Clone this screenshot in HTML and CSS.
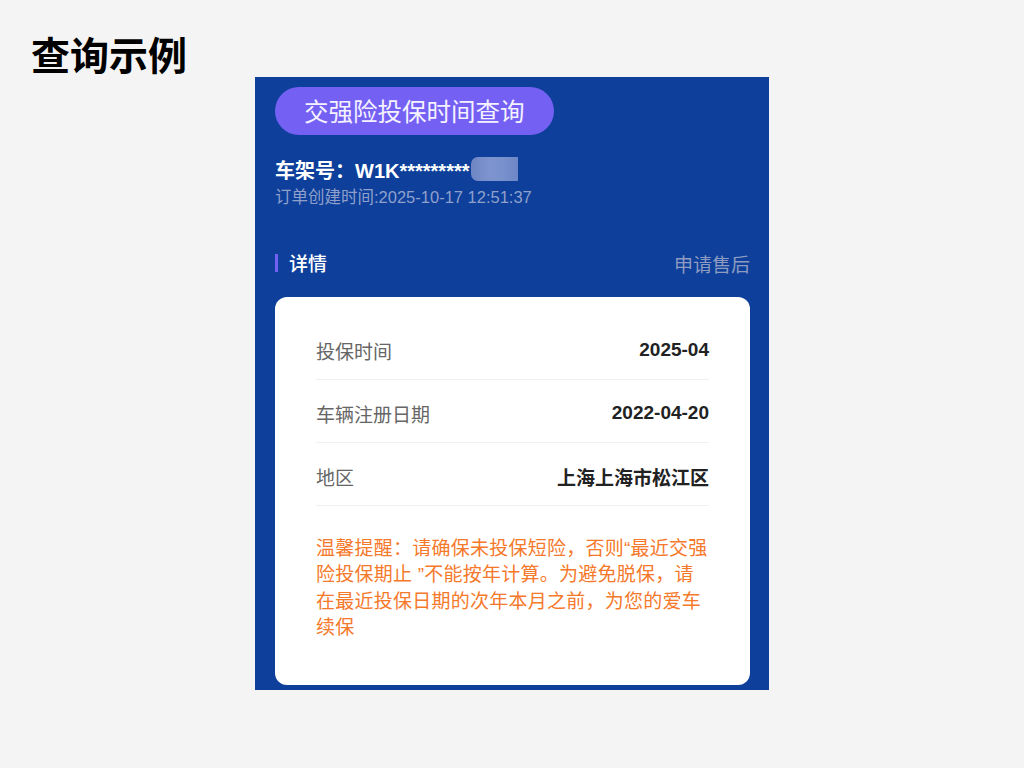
FILE: index.html
```html
<!DOCTYPE html>
<html lang="zh-CN">
<head>
    <meta charset="UTF-8">
    <meta name="viewport" content="width=device-width, initial-scale=1.0">
    <title>查询示例</title>
    <link rel="stylesheet" href="styles.css">
</head>
<body>
    <h1 class="page-title">查询示例</h1>

    <div class="phone">
        <div class="pill">交强险投保时间查询</div>

        <div class="vin">
            <span>车架号：W1K*********</span><span class="blur"></span>
        </div>
        <p class="order-time">订单创建时间:2025-10-17 12:51:37</p>

        <div class="section-head">
            <span class="section-title">详情</span>
            <span class="after-sale">申请售后</span>
        </div>

        <div class="card">
            <div class="row">
                <span class="label">投保时间</span>
                <span class="value">2025-04</span>
            </div>
            <div class="row">
                <span class="label">车辆注册日期</span>
                <span class="value">2022-04-20</span>
            </div>
            <div class="row">
                <span class="label">地区</span>
                <span class="value">上海上海市松江区</span>
            </div>
            <p class="notice">温馨提醒：请确保未投保短险，否则“最近交强险投保期止 ”不能按年计算。为避免脱保，请在最近投保日期的次年本月之前，为您的爱车续保</p>
        </div>
    </div>
</body>
</html>
```

FILE: styles.css
```css
* {
    margin: 0;
    padding: 0;
    box-sizing: border-box;
}

body {
    background-color: #f4f4f4;
    font-family: 'Liberation Sans', 'Noto Sans CJK SC', sans-serif;
    color: #222;
}

.page-title {
    font-family: 'Noto Sans CJK SC', sans-serif;
    font-size: 39px;
    font-weight: 700;
    line-height: 52px;
    margin: 27px 0 0 31px;
    color: #000;
}

.phone {
    width: 514px;
    height: 613px;
    margin: -2px 0 0 255px;
    background-color: #0d3f9b;
    padding: 10px 19px 0 20px;
}

.pill {
    display: inline-block;
    height: 48px;
    line-height: 48px;
    padding: 0 29px;
    border-radius: 24px;
    background-color: #7461f4;
    color: #f4f2ff;
    font-family: 'Noto Sans CJK SC', sans-serif;
    font-size: 24.5px;
}

.vin {
    display: flex;
    align-items: center;
    margin-top: 21px;
    height: 26px;
    color: #fff;
    font-size: 20px;
    font-weight: 700;
}

.blur {
    width: 47px;
    height: 24px;
    margin-left: 1px;
    border-radius: 7px 0 0 7px;
    background: linear-gradient(90deg, #6f86c4 0%, #7d94d0 40%, #7890cc 70%, #6e86c5 100%);
}

.order-time {
    margin-top: 3px;
    font-size: 16.5px;
    line-height: 24px;
    color: #90a0cb;
}

.section-head {
    display: flex;
    justify-content: space-between;
    align-items: center;
    margin-top: 40px;
    height: 28px;
}

.section-title {
    border-left: 3px solid #7461f4;
    padding-left: 11px;
    line-height: 18px;
    color: #fff;
    font-family: 'Noto Sans CJK SC', sans-serif;
    font-size: 19px;
    font-weight: 500;
}

.after-sale {
    color: #8d9cc0;
    font-family: 'Noto Sans CJK SC', sans-serif;
    font-size: 19px;
}

.card {
    margin-top: 20px;
    height: 388px;
    background-color: #fff;
    border-radius: 12px;
    padding: 20px 41px 0 41px;
}

.row {
    display: flex;
    justify-content: space-between;
    align-items: center;
    height: 63px;
    border-bottom: 1px solid #f0f0f0;
    padding-top: 4px;
}

.label {
    font-family: 'Noto Sans CJK SC', sans-serif;
    font-size: 19px;
    color: #666;
}

.value {
    font-size: 19px;
    font-weight: 700;
    color: #222;
}

.notice {
    margin: 30px -3px 0 0;
    font-size: 19px;
    line-height: 26.4px;
    letter-spacing: 0.25px;
    color: #f5792b;
}
```
